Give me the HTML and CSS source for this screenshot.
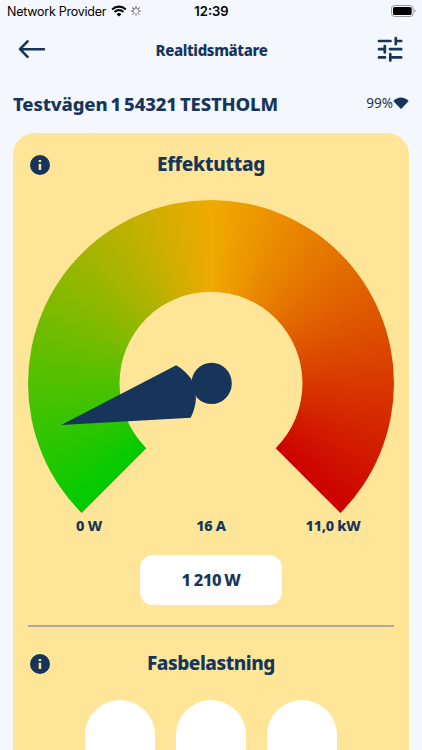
FILE: index.html
```html
<!DOCTYPE html>
<html lang="sv">
<head>
    <meta charset="UTF-8">
    <meta name="viewport" content="width=device-width, initial-scale=1.0">
    <title>Realtidsmätare</title>
    <link rel="stylesheet" href="styles.css">
</head>
<body>
    <div class="status-bar">
        <div class="carrier">
            <span>Network Provider</span>
            <svg class="wifi" width="16" height="12" viewBox="0 0 16 12">
                <path d="M1.2 4.4a9.7 9.7 0 0 1 13.6 0M3.6 6.9a6.3 6.3 0 0 1 8.8 0" fill="none" stroke="#000" stroke-width="2.1"/>
                <path d="M8 11.6 5.6 9.2a3.4 3.4 0 0 1 4.8 0z"/>
            </svg>
            <svg class="spinner" width="10" height="10" viewBox="0 0 10 10" fill="none" stroke-width="1.1" stroke-linecap="round">
                <path d="M5 .5v2M8.2 1.8 6.8 3.2M9.5 5h-2" stroke="#555"/>
                <path d="M8.2 8.2 6.8 6.8M5 9.5v-2M1.8 8.2l1.4-1.4" stroke="#888"/>
                <path d="M.5 5h2M1.8 1.8l1.4 1.4" stroke="#333"/>
            </svg>
        </div>
        <div class="clock">12:39</div>
        <svg class="battery" width="25" height="12" viewBox="0 0 25 12">
            <rect x=".5" y=".5" width="21.6" height="11" rx="3" fill="none" stroke="#999"/>
            <rect x="2" y="2" width="18.6" height="8" rx="1.6"/>
            <path d="M23.4 4.2c1.6.6 1.6 3 0 3.6z" fill="#999"/>
        </svg>
    </div>

    <header class="header">
        <svg width="28" height="20" viewBox="0 0 28 20" fill="none" stroke="#17355b" stroke-width="2.6" stroke-linecap="round" stroke-linejoin="round">
            <path d="M26 10.2H2.2M9.6 2.4 2 10.2l7.6 7.6"/>
        </svg>
        <h1>Realtidsmätare</h1>
        <svg width="26" height="26" viewBox="0 0 26 26" fill="none" stroke="#17355b" stroke-width="2.7" stroke-linecap="round">
            <path d="M2 5h11.5M18.8 5h5.4M18.8 2v6.2M2 13.2h5.4M7.8 10v6.4M13 13.2h11.2M2 21.4h6M13.3 18.2v6.4M13.3 21.4h10.9"/>
        </svg>
    </header>

    <div class="address">
        <h2>Testvägen 1 54321 TESTHOLM</h2>
        <div class="signal">
            <span>99%</span>
            <svg width="16" height="12" viewBox="0 0 16 12" fill="#17355b">
                <path d="M.3 4.1C4.5-.8 11.5-.8 15.7 4.1L8.6 11.6q-.6.6-1.2 0z"/>
            </svg>
        </div>
    </div>

    <main class="card">
        <div class="card-title">
            <svg width="20" height="20" viewBox="0 0 20 20">
                <circle cx="10" cy="10" r="10" fill="#17355b"/>
                <path d="M8.7 5.1h2.5v2H8.7zM8.7 8.8h2.5V15H8.7z" fill="#ffe597"/>
            </svg>
            <h3 class="power-title">Effektuttag</h3>
        </div>

        <div class="gauge">
            <div class="gauge-ring"></div>
            <svg class="needle" width="366" height="314" viewBox="0 0 366 314" fill="#17355b">
                <path d="M33.2 225 148.2 165.2Q156 169.5 163.4 179L168 198Q167.5 208 162.7 217.7z"/>
                <ellipse cx="183.6" cy="183.4" rx="20.2" ry="20.6"/>
            </svg>
        </div>
        <div class="scale">
            <span>0 W</span>
            <span>16 A</span>
            <span>11,0 kW</span>
        </div>
        <div class="reading">1 210 W</div>

        <hr class="divider">

        <div class="card-title">
            <svg width="20" height="20" viewBox="0 0 20 20">
                <circle cx="10" cy="10" r="10" fill="#17355b"/>
                <path d="M8.7 5.1h2.5v2H8.7zM8.7 8.8h2.5V15H8.7z" fill="#ffe597"/>
            </svg>
            <h3 class="phase-title">Fasbelastning</h3>
        </div>
        <div class="phases">
            <div class="phase"></div>
            <div class="phase"></div>
            <div class="phase"></div>
        </div>
    </main>
</body>
</html>
```
FILE: styles.css
```css
* {
    box-sizing: border-box;
    margin: 0;
    padding: 0;
}
body {
    height: 750px;
    overflow: hidden;
    font-family: 'Noto Sans', sans-serif;
    background-color: #f4f7fd;
    color: #17355b;
}
svg {
    display: block;
    flex-shrink: 0;
}
h1, h2, h3 {
    font-weight: 800;
    white-space: nowrap;
}
.status-bar {
    display: grid;
    grid-template-columns: 1fr auto 1fr;
    align-items: center;
    height: 22px;
    padding: 0 6px 0 7px;
    font-family: 'Inter', sans-serif;
    font-size: 12.5px;
    color: #000;
}
.carrier {
    display: flex;
    align-items: center;
    white-space: nowrap;
    letter-spacing: -0.25px;
}
.wifi {
    margin-left: 5px;
}
.spinner {
    margin-left: 4px;
}
.clock {
    font-size: 13px;
    font-weight: 600;
}
.battery {
    justify-self: end;
}
.header {
    display: flex;
    align-items: center;
    justify-content: space-between;
    height: 54px;
    padding: 0 19px 0 18px;
}
.header h1 {
    font-size: 15px;
    line-height: 20px;
    letter-spacing: -0.35px;
    padding-top: 2px;
}
.address {
    display: flex;
    align-items: center;
    justify-content: space-between;
    height: 57px;
    padding: 0 13px 3px;
}
.address h2 {
    font-size: 18.5px;
    letter-spacing: -0.15px;
    word-spacing: -1.6px;
}
.signal {
    display: flex;
    align-items: center;
    font-size: 13.5px;
}
.card {
    height: 617px;
    margin: 0 13px;
    padding: 21px 15px 0;
    background-color: #ffe597;
    border-radius: 22px 22px 0 0;
}
.card-title {
    display: grid;
    grid-template-columns: 20px 1fr 20px;
    align-items: center;
    height: 20px;
    padding: 0 2px;
}
.card-title h3 {
    font-size: 19px;
    line-height: 20px;
    padding-bottom: 2px;
    text-align: center;
}
.power-title {
    letter-spacing: -0.25px;
}
.phase-title {
    letter-spacing: -0.45px;
}
.gauge {
    position: relative;
    width: 366px;
    height: 314px;
    margin-top: 26px;
}
.gauge-ring {
    width: 366px;
    height: 314px;
    background: conic-gradient(from 225deg at 183px 183.5px, #00cc00 0deg, #f0aa00 135deg, #cc0000 270deg);
    clip-path: path('M53.6 313A183 183.4 0 1 1 312.4 313L247.7 248.2A91.5 91.7 0 1 0 118.3 248.2Z');
}
.needle {
    position: absolute;
    left: 0;
    top: 0;
}
.scale {
    display: grid;
    grid-template-columns: repeat(3, 1fr);
    font-size: 14.5px;
    font-weight: 800;
    line-height: 20px;
    letter-spacing: -0.3px;
    text-align: center;
    padding-top: 1px;
}
.reading {
    width: 142px;
    height: 50px;
    margin: 19.5px auto 0;
    font-size: 16.5px;
    font-weight: 800;
    line-height: 49px;
    letter-spacing: -0.3px;
    word-spacing: -1px;
    text-align: center;
    background-color: #fff;
    border-radius: 13px;
}
.divider {
    height: 2px;
    margin: 20.5px 0 26px;
    border: none;
    background-color: #afaaa0;
}
.phases {
    display: flex;
    justify-content: center;
    gap: 20.5px;
    margin-top: 27px;
}
.phase {
    width: 70.5px;
    height: 50px;
    background-color: #fff;
    border-radius: 35px 35px 0 0;
}
```
